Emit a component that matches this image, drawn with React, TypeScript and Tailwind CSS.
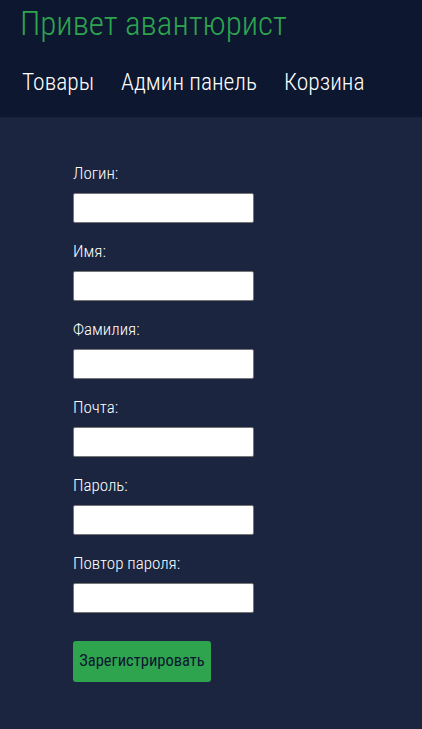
import React from "react";

const fields = ["Логин:", "Имя:", "Фамилия:", "Почта:", "Пароль:", "Повтор пароля:"];

export default function App() {
  return (
    <div
      className="min-h-[729px] bg-[#1b2540]"
      style={{ fontFamily: '"Roboto Condensed", "Liberation Sans Narrow", Roboto, sans-serif' }}
    >
      <header className="h-[118px] bg-[#0d1730] border-b border-[#18223a] px-5 pt-[3px]">
        <h1 className="text-[33px] leading-[42px] font-light text-[#2ea44f]">Привет авантюрист</h1>
        <nav className="flex gap-[27px] mt-[22px] pl-[2px] text-[23.5px] leading-[30px] font-[350] text-white">
          <a>Товары</a>
          <a>Админ панель</a>
          <a>Корзина</a>
        </nav>
      </header>
      <main className="pl-[73px] pt-[44px] pb-10">
        <form className="flex flex-col">
          {fields.map((f) => (
            <div key={f} className="flex flex-col h-[78px]">
              <label className="text-[17px] leading-[22px] font-light text-white">{f}</label>
              <input className="mt-[9px] w-[181px] h-[30px] bg-white border border-[#767676] rounded-[2px]" />
            </div>
          ))}
          <button
            type="button"
            className="mt-[11px] w-[138px] h-[41px] rounded-[3px] bg-[#2ea44f] text-[#0d1730] text-[16.5px] font-normal"
          >
            Зарегистрировать
          </button>
        </form>
      </main>
    </div>
  );
}
